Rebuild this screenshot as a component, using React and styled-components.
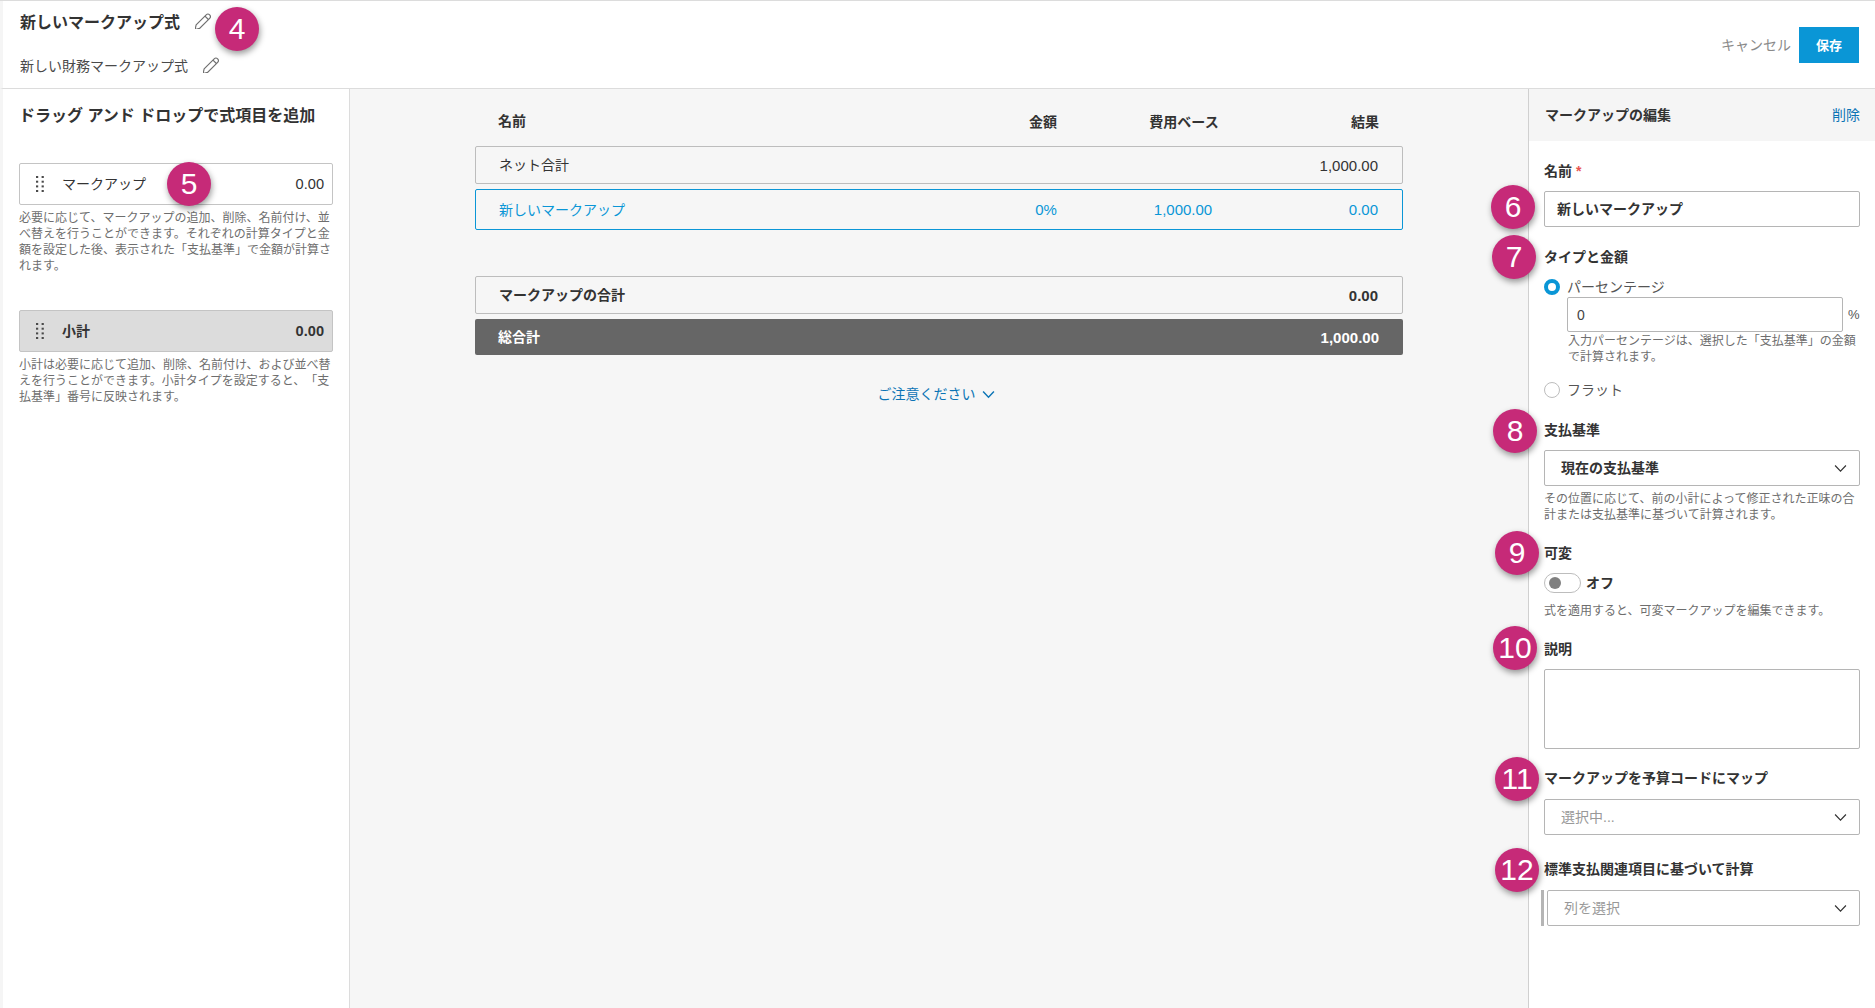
import styled, { createGlobalStyle } from "styled-components"

const fonts = `"Liberation Sans", "Noto Sans CJK JP", sans-serif`

const GlobalStyle = createGlobalStyle`
html, body {
    margin: 0;
    padding: 0;
    background: #fff;
}
* {
    box-sizing: border-box;
}
`

const Pencil = () => (
    <PencilIcon viewBox="1.5 1.5 13 13" fill="none" stroke="#6f6f6f" strokeWidth="0.95">
        <path d="M2.4 11.2 10.6 3a2 2 0 0 1 2.8 0 2 2 0 0 1 0 2.8l-8.2 8.2-3.6.9z" />
        <path d="M9.6 4 12.4 6.8" />
    </PencilIcon>
)

const Grip = () => (
    <GripIcon viewBox="0 0 8 16" fill="#4a4a4a">
        {[0, 4.7, 9.4, 14].map((y) =>
            [0, 5.6].map((x) => <rect key={`${x}-${y}`} x={x} y={y} width="2.2" height="2" />)
        )}
    </GripIcon>
)

const Chevron = () => (
    <ChevronIcon viewBox="0 0 12 8" fill="none" stroke="#333" strokeWidth="1.1">
        <path d="M1 1.2 6 6.4 11 1.2" />
    </ChevronIcon>
)

const badges = [
    { n: 4, x: 237, y: 28 },
    { n: 5, x: 189, y: 183 },
    { n: 6, x: 1513, y: 206 },
    { n: 7, x: 1514, y: 256 },
    { n: 8, x: 1515, y: 430 },
    { n: 9, x: 1517, y: 552 },
    { n: 10, x: 1515, y: 647 },
    { n: 11, x: 1517, y: 778 },
    { n: 12, x: 1517, y: 869 },
]

const App = () => {
    return (
        <Page>
            <GlobalStyle />
            <Header>
                <TitleBlock>
                    <TitleRow>
                        <Title>新しいマークアップ式</Title>
                        <Pencil />
                    </TitleRow>
                    <SubRow>
                        <Subtitle>新しい財務マークアップ式</Subtitle>
                        <Pencil />
                    </SubRow>
                </TitleBlock>
                <Actions>
                    <Cancel>キャンセル</Cancel>
                    <Save>保存</Save>
                </Actions>
            </Header>
            <Body>
                <Sidebar>
                    <SideTitle>ドラッグ アンド ドロップで式項目を追加</SideTitle>
                    <DragCard>
                        <Grip />
                        <DragName>マークアップ</DragName>
                        <DragValue>0.00</DragValue>
                    </DragCard>
                    <SideHelp>
                        必要に応じて、マークアップの追加、削除、名前付け、並べ替えを行うことができます。それぞれの計算タイプと金額を設定した後、表示された「支払基準」で金額が計算されます。
                    </SideHelp>
                    <DragCard $sub>
                        <Grip />
                        <DragName>小計</DragName>
                        <DragValue>0.00</DragValue>
                    </DragCard>
                    <SideHelp>
                        小計は必要に応じて追加、削除、名前付け、および並べ替えを行うことができます。小計タイプを設定すると、「支払基準」番号に反映されます。
                    </SideHelp>
                </Sidebar>
                <Center>
                    <TableHead>
                        <NameCell>名前</NameCell>
                        <AmountCell>金額</AmountCell>
                        <BaseCell>費用ベース</BaseCell>
                        <ResultCell>結果</ResultCell>
                    </TableHead>
                    <Row>
                        <NameCell>ネット合計</NameCell>
                        <AmountCell />
                        <BaseCell />
                        <ResultCell>1,000.00</ResultCell>
                    </Row>
                    <Row $active>
                        <NameCell>新しいマークアップ</NameCell>
                        <AmountCell $value>0%</AmountCell>
                        <BaseCell>1,000.00</BaseCell>
                        <ResultCell>0.00</ResultCell>
                    </Row>
                    <Row $total>
                        <NameCell>マークアップの合計</NameCell>
                        <AmountCell />
                        <BaseCell />
                        <ResultCell>0.00</ResultCell>
                    </Row>
                    <GrandRow>
                        <NameCell>総合計</NameCell>
                        <AmountCell />
                        <BaseCell />
                        <ResultCell>1,000.00</ResultCell>
                    </GrandRow>
                    <NoteLink>
                        ご注意ください
                        <NoteChevron viewBox="0 0 12 8" fill="none" stroke="#0b74b5" strokeWidth="1.3">
                            <path d="M1 1.2 6 6.6 11 1.2" />
                        </NoteChevron>
                    </NoteLink>
                </Center>
                <Panel>
                    <PanelHead>
                        <PanelTitle>マークアップの編集</PanelTitle>
                        <DeleteLink>削除</DeleteLink>
                    </PanelHead>
                    <Form>
                        <Label $top={20}>
                            名前 <Req>*</Req>
                        </Label>
                        <TextBox $top={10} $bold>新しいマークアップ</TextBox>
                        <Label $top={20}>タイプと金額</Label>
                        <RadioRow $top={11}>
                            <Radio $on />
                            <RadioText>パーセンテージ</RadioText>
                        </RadioRow>
                        <PercentRow>
                            <PercentBox>0</PercentBox>
                            <PercentSign>%</PercentSign>
                        </PercentRow>
                        <IndentHelp>入力パーセンテージは、選択した「支払基準」の金額で計算されます。</IndentHelp>
                        <RadioRow $top={16}>
                            <Radio />
                            <RadioText>フラット</RadioText>
                        </RadioRow>
                        <Label $top={21}>支払基準</Label>
                        <SelectBox $top={10} $bold>
                            現在の支払基準
                            <Chevron />
                        </SelectBox>
                        <Help>その位置に応じて、前の小計によって修正された正味の合計または支払基準に基づいて計算されます。</Help>
                        <Label $top={20}>可変</Label>
                        <ToggleRow>
                            <Toggle>
                                <Knob />
                            </Toggle>
                            <ToggleText>オフ</ToggleText>
                        </ToggleRow>
                        <Help $top={10}>式を適用すると、可変マークアップを編集できます。</Help>
                        <Label $top={20}>説明</Label>
                        <TextArea />
                        <Label $top={19}>マークアップを予算コードにマップ</Label>
                        <SelectBox $top={11} $muted>
                            選択中...
                            <Chevron />
                        </SelectBox>
                        <Label $top={24}>標準支払関連項目に基づいて計算</Label>
                        <BarredSelect>
                            <SideBar />
                            <SelectBox $muted $grow>
                                列を選択
                                <Chevron />
                            </SelectBox>
                        </BarredSelect>
                    </Form>
                </Panel>
            </Body>
            {badges.map((b) => (
                <Badge key={b.n} style={{ left: b.x - 22, top: b.y - 22 }}>
                    {b.n}
                </Badge>
            ))}
        </Page>
    )
}

export default App

const Page = styled.div`
position: relative;
width: 1875px;
height: 1008px;
overflow: hidden;
display: flex;
flex-direction: column;
border-top: 1px solid #dcdcdc;
font-family: ${fonts};
color: #333;
background: #fff;
text-spacing-trim: space-all;
`
const Header = styled.header`
height: 88px;
flex: none;
display: flex;
justify-content: space-between;
align-items: flex-start;
padding: 0 16px 0 19px;
border-bottom: 1px solid #dcdcdc;
border-left: 3px solid #f5f5f5;
`
const TitleBlock = styled.div`
display: flex;
flex-direction: column;
margin-left: -2px;
`
const TitleRow = styled.div`
height: 20px;
margin-top: 10px;
display: flex;
align-items: center;
gap: 15px;
`
const Title = styled.div`
font-size: 16px;
font-weight: 700;
color: #333;
`
const SubRow = styled.div`
height: 20px;
margin-top: 24px;
display: flex;
align-items: center;
gap: 15px;
`
const Subtitle = styled.div`
font-size: 14px;
color: #4a4a4a;
`
const PencilIcon = styled.svg`
width: 16px;
height: 16px;
flex: none;
`
const Actions = styled.div`
display: flex;
align-items: center;
gap: 8px;
margin-top: 26px;
`
const Cancel = styled.div`
font-size: 14px;
color: #8a8a8a;
padding-bottom: 2px;
`
const Save = styled.div`
width: 60px;
height: 36px;
display: flex;
align-items: center;
justify-content: center;
padding-bottom: 2px;
background: #0a96d6;
color: #fff;
font-size: 13px;
font-weight: 700;
`
const Body = styled.div`
flex: 1;
display: flex;
min-height: 0;
`
const Sidebar = styled.aside`
width: 350px;
flex: none;
padding: 0 16px 0 16px;
background: #fff;
border-left: 3px solid #f5f5f5;
border-right: 1px solid #dcdcdc;
`
const SideTitle = styled.div`
font-size: 16px;
font-weight: 700;
line-height: 20px;
margin-top: 17px;
margin-bottom: 37px;
`
const DragCard = styled.div`
height: 42px;
display: flex;
align-items: center;
padding: 0 8px 0 16px;
border: 1px solid #c4c4c4;
border-radius: 2px;
background: ${(p) => (p.$sub ? "#dcdcdc" : "#fff")};
font-weight: ${(p) => (p.$sub ? 700 : 400)};
`
const GripIcon = styled.svg`
width: 8px;
height: 16px;
flex: none;
`
const DragName = styled.div`
font-size: 14px;
margin-left: 18px;
padding-bottom: 2px;
flex: 1;
`
const DragValue = styled.div`
font-size: 14.6px;
`
const SideHelp = styled.p`
margin: 5px 0 36px;
font-size: 12px;
line-height: 16px;
color: #6e6e6e;
`
const Center = styled.main`
flex: 1;
background: #f6f6f6;
padding: 0 125px;
font-size: 14px;
`
const columns = `
display: grid;
grid-template-columns: 1fr 152px 130px 130px;
align-items: center;
`
const TableHead = styled.div`
${columns}
height: 57px;
padding: 7px 24px 0 23px;
font-size: 14px;
font-weight: 700;
`
const NameCell = styled.div`
font-size: 14px;
padding-bottom: 2px;
`
const AmountCell = styled.div`
text-align: center;
padding-left: ${(p) => (p.$value ? "8px" : "0")};
`
const BaseCell = styled.div`
text-align: center;
`
const ResultCell = styled.div`
text-align: right;
`
const Row = styled.div`
${columns}
height: ${(p) => (p.$active ? "41px" : "38px")};
margin-top: ${(p) => (p.$active ? "5px" : p.$total ? "46px" : "0")};
padding: 0 24px 0 23px;
border: 1px solid ${(p) => (p.$active ? "#0a96d6" : "#bdbdbd")};
border-radius: 2px;
font-size: 15px;
color: ${(p) => (p.$active ? "#0a96d6" : "#333")};
font-weight: ${(p) => (p.$total ? 700 : 400)};
`
const GrandRow = styled.div`
${columns}
height: 36px;
margin-top: 5px;
padding: 0 24px 0 23px;
background: #666;
border-radius: 2px;
font-size: 15px;
color: #fff;
font-weight: 700;
`
const NoteLink = styled.div`
display: flex;
align-items: center;
justify-content: center;
gap: 6px;
height: 20px;
margin-top: 28px;
padding-right: 6px;
color: #0b74b5;
font-size: 14px;
`
const NoteChevron = styled.svg`
width: 13px;
height: 9px;
margin-top: 2px;
`
const Panel = styled.aside`
width: 347px;
flex: none;
background: #fff;
border-left: 1px solid #d0d0d0;
`
const PanelHead = styled.div`
height: 52px;
display: flex;
align-items: center;
justify-content: space-between;
padding: 0 15px 2px 16px;
background: #f5f5f5;
`
const PanelTitle = styled.div`
font-size: 14px;
font-weight: 700;
`
const DeleteLink = styled.div`
font-size: 14px;
color: #0b74b5;
`
const Form = styled.div`
display: flex;
flex-direction: column;
padding: 0 15px;
`
const Label = styled.div`
height: 20px;
line-height: 20px;
margin-top: ${(p) => p.$top || 0}px;
font-size: 14px;
font-weight: 700;
`
const Req = styled.span`
color: #e8534f;
`
const TextBox = styled.div`
height: 36px;
margin-top: ${(p) => p.$top || 0}px;
display: flex;
align-items: center;
padding: 0 12px 3px;
border: 1px solid #b5b5b5;
border-radius: 2px;
font-size: 14px;
font-weight: ${(p) => (p.$bold ? 700 : 400)};
`
const RadioRow = styled.div`
height: 18px;
margin-top: ${(p) => p.$top || 0}px;
display: flex;
align-items: center;
gap: 7px;
`
const Radio = styled.span`
width: 16px;
height: 16px;
flex: none;
border-radius: 50%;
background: #fff;
border: ${(p) => (p.$on ? "4px solid #0a96d6" : "1px solid #bdbdbd")};
`
const RadioText = styled.span`
font-size: 14px;
color: #555;
padding-bottom: 2px;
`
const PercentRow = styled.div`
display: flex;
align-items: center;
gap: 5px;
margin-top: 1px;
margin-left: 23px;
`
const PercentBox = styled.div`
width: 276px;
height: 35px;
display: flex;
align-items: center;
padding: 0 9px;
border: 1px solid #b5b5b5;
border-radius: 2px;
font-size: 14px;
color: #444;
`
const PercentSign = styled.div`
font-size: 13px;
color: #555;
`
const Help = styled.p`
margin: ${(p) => p.$top || 5}px 0 0;
font-size: 12px;
line-height: 16px;
color: #6e6e6e;
`
const IndentHelp = styled(Help)`
margin-top: 1px;
margin-left: 24px;
`
const SelectBox = styled.div`
height: 36px;
flex: ${(p) => (p.$grow ? 1 : "none")};
margin-top: ${(p) => p.$top || 0}px;
display: flex;
align-items: center;
justify-content: space-between;
padding: 0 12px 2px 16px;
border: 1px solid #b5b5b5;
border-radius: 2px;
font-size: 14px;
font-weight: ${(p) => (p.$bold ? 700 : 400)};
color: ${(p) => (p.$muted ? "#999" : "#333")};
`
const ChevronIcon = styled.svg`
width: 13px;
height: 9px;
flex: none;
margin-top: 2px;
`
const ToggleRow = styled.div`
height: 20px;
display: flex;
align-items: center;
gap: 5px;
margin-top: 10px;
`
const Toggle = styled.div`
width: 37px;
height: 20px;
display: flex;
align-items: center;
padding-left: 4px;
border: 1px solid #bdbdbd;
border-radius: 10px;
`
const Knob = styled.span`
width: 12px;
height: 12px;
border-radius: 50%;
background: #808080;
`
const ToggleText = styled.span`
font-size: 14px;
font-weight: 700;
padding-bottom: 2px;
`
const TextArea = styled.div`
height: 80px;
margin-top: 10px;
border: 1px solid #b5b5b5;
border-radius: 2px;
`
const BarredSelect = styled.div`
display: flex;
gap: 3px;
margin-top: 11px;
margin-left: -3px;
`
const SideBar = styled.span`
width: 3px;
background: #b5b5b5;
`
const Badge = styled.div`
position: absolute;
width: 44px;
height: 44px;
display: flex;
align-items: center;
justify-content: center;
border-radius: 50%;
background: #c62a78;
color: #fff;
font-size: 30px;
font-family: "Liberation Sans", sans-serif;
box-shadow: 1px 3px 6px rgba(0, 0, 0, 0.4);
`
